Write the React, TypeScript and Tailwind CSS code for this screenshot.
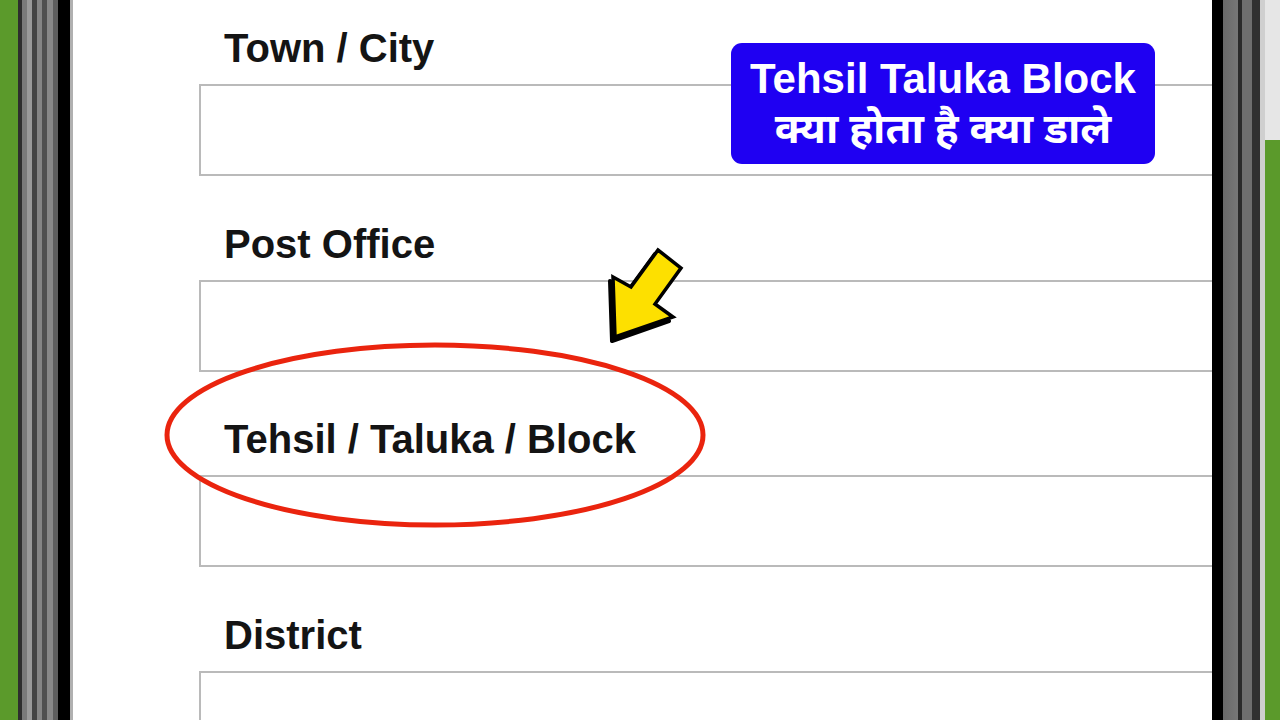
import React from "react";

const fields = ["Town / City", "Post Office", "Tehsil / Taluka / Block", "District"];

const App: React.FC = () => {
  return (
    <div className="relative flex w-[1280px] h-[720px] overflow-hidden bg-white font-['Liberation_Sans',Arial,sans-serif]">
      {/* left green + phone frame */}
      <div className="w-[18px] h-full bg-[#5b9a2b]"></div>
      <div className="w-[55px] h-full bg-[linear-gradient(90deg,#2e2e2e_0px,#2e2e2e_4px,#7a7a7a_4px,#7a7a7a_9px,#9a9a9a_9px,#9a9a9a_14px,#444_14px,#444_19px,#858585_19px,#858585_24px,#505050_24px,#505050_29px,#888_29px,#888_35px,#5e5e5e_35px,#5e5e5e_40px,#000_40px,#000_52px,#b0b0b0_52px)]"></div>

      {/* screen */}
      <div className="flex-1 h-full bg-white overflow-hidden pt-[28px]">
        <div className="flex flex-col gap-[47.5px]">
          {fields.map((f) => (
            <div key={f} className="flex flex-col">
              <div className="ml-[151px] h-[40px] text-[40px] leading-none font-bold text-[#141414] whitespace-nowrap">
                {f}
              </div>
              <div className="mt-[16px] ml-[126px] h-[92px] border-2 border-r-0 border-[#bababa]"></div>
            </div>
          ))}
        </div>
      </div>

      {/* right frame + green */}
      <div className="w-[53px] h-full bg-[linear-gradient(90deg,#000_0px,#000_11px,#6a6a6a_11px,#777_26px,#2a2a2a_26px,#2a2a2a_30px,#6e6e6e_30px,#6e6e6e_40px,#303030_40px,#303030_48px,#cfcfcf_48px)]"></div>
      <div className="flex flex-col w-[15px] h-full">
        <div className="h-[140px] bg-[#e6e6e6]"></div>
        <div className="flex-1 bg-[#5b9a2b]"></div>
      </div>

      {/* blue caption badge */}
      <div className="absolute left-[731px] top-[43px] w-[424px] h-[121px] rounded-[11px] bg-[#1f00f2] flex flex-col items-center justify-center text-white font-bold">
        <div className="text-[42px] leading-[46px] whitespace-nowrap">Tehsil Taluka Block</div>
        <div className="text-[42px] leading-[50px] whitespace-nowrap font-['Noto_Sans','Noto_Sans_Devanagari',sans-serif]">क्या होता है क्या डाले</div>
      </div>

      {/* yellow arrow */}
      <svg className="absolute left-[600px] top-[245px]" width="90" height="100" viewBox="600 245 90 100">
        <polygon
          points="612,341 610,281 628,291 655,254 677,272 651,308 669,321"
          fill="#000"
          stroke="#000"
          strokeWidth="4"
          strokeLinejoin="round"
        />
        <polygon
          points="615,337 613,277 631,287 658,250 681,268 655,304 673,317"
          fill="#fde000"
          stroke="#000"
          strokeWidth="3.5"
          strokeLinejoin="miter"
        />
      </svg>

      {/* red ellipse */}
      <svg className="absolute left-0 top-0" width="1280" height="720" viewBox="0 0 1280 720">
        <ellipse cx="435" cy="435" rx="268" ry="90" fill="none" stroke="#ea240e" strokeWidth="5" />
      </svg>
    </div>
  );
};

export default App;
